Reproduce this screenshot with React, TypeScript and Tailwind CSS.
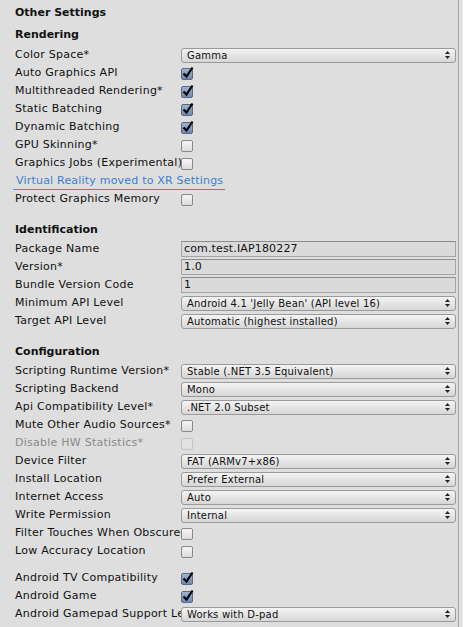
import type { ReactNode } from "react";

const font = "font-['DejaVu_Sans','Liberation_Sans',sans-serif]";

function Arrows() {
  return (
    <svg width="5" height="8" viewBox="0 0 5 8" className="shrink-0">
      <path d="M2.5 0 L5 3 L0 3 Z" fill="#222" />
      <path d="M0 5 L5 5 L2.5 8 Z" fill="#222" />
    </svg>
  );
}

function Popup({ value }: { value: string }) {
  return (
    <div className="flex h-[15px] w-[275px] items-center justify-between rounded-[3px] border border-[#9a9a9a] bg-gradient-to-b from-[#f4f4f4] to-[#d6d6d6] pl-[5px] pr-[5px] text-[10px] tracking-[0.2px] text-[#111]">
      <span className="whitespace-nowrap">{value}</span>
      <Arrows />
    </div>
  );
}

function TextField({ value }: { value: string }) {
  return (
    <div className="flex h-[16px] w-[275px] items-center border border-[#a4a4a4] border-t-[#8c8c8c] bg-[#dadada] pl-[2px] text-[11px] tracking-[0.15px] text-[#111]">
      {value}
    </div>
  );
}

function Check({ on, disabled }: { on?: boolean; disabled?: boolean }) {
  if (on) {
    return (
      <div className="relative mt-[2px] h-[12px] w-[12px] rounded-[2px] border border-[#5b6a80] bg-gradient-to-b from-[#9db3d3] to-[#6f89b0]">
        <svg width="12" height="13" viewBox="0 0 12 13" className="absolute left-[0px] top-[-3px]">
          <path d="M1.5 7.5 L4.5 10.5 L10.5 1.5" fill="none" stroke="#000" strokeWidth="2.2" />
        </svg>
      </div>
    );
  }
  return (
    <div
      className={
        disabled
          ? "mt-[2px] h-[12px] w-[12px] rounded-[2px] border border-[#c4c4c4] bg-[#e2e2e2]"
          : "mt-[2px] h-[12px] w-[12px] rounded-[2px] border border-[#8a8a8a] bg-gradient-to-b from-[#f6f6f6] to-[#dcdcdc]"
      }
    />
  );
}

function Row({ label, children, dim }: { label: string; children?: ReactNode; dim?: boolean }) {
  return (
    <div className="flex h-[18px] items-center">
      <div
        className={`w-[181px] shrink-0 overflow-hidden whitespace-nowrap pl-[15px] pr-[2px] text-[11px] leading-[18px] tracking-[0.25px] ${
          dim ? "text-[#8a8a8a]" : "text-[#111]"
        }`}
      >
        {label}
      </div>
      <div className="flex items-center">{children}</div>
    </div>
  );
}

function Heading({ text, className }: { text: string; className?: string }) {
  return (
    <div className={`flex h-[18px] items-center pl-[15px] text-[11px] font-bold text-[#111] ${className ?? ""}`}>
      {text}
    </div>
  );
}

export default function App() {
  return (
    <div className={`flex h-[627px] w-[463px] overflow-hidden bg-[#dedede] ${font}`}>
      {/* settings panel */}
      <div className="flex w-[459px] shrink-0 flex-col border-r border-[#a6a6a6] pt-[4px]">
        <Heading text="Other Settings" />

        <Heading text="Rendering" className="mt-[4px]" />
        <div className="mt-[2px] flex flex-col">
          <Row label="Color Space*">
            <Popup value="Gamma" />
          </Row>
          <Row label="Auto Graphics API">
            <Check on />
          </Row>
          <Row label="Multithreaded Rendering*">
            <Check on />
          </Row>
          <Row label="Static Batching">
            <Check on />
          </Row>
          <Row label="Dynamic Batching">
            <Check on />
          </Row>
          <Row label="GPU Skinning*">
            <Check />
          </Row>
          <Row label="Graphics Jobs (Experimental)">
            <Check />
          </Row>
          <div className="flex h-[18px] flex-col">
            <span className="pl-[16px] text-[11px] leading-[17px] tracking-[0.2px] text-[#3b7fd6]">Virtual Reality moved to XR Settings</span>
            <div className="ml-[13px] h-px w-[212px] bg-[#4a8ae0]" />
          </div>
          <Row label="Protect Graphics Memory">
            <Check />
          </Row>
        </div>

        <Heading text="Identification" className="mt-[13px]" />
        <div className="mt-[1px] flex flex-col">
          <Row label="Package Name">
            <TextField value="com.test.IAP180227" />
          </Row>
          <Row label="Version*">
            <TextField value="1.0" />
          </Row>
          <Row label="Bundle Version Code">
            <TextField value="1" />
          </Row>
          <Row label="Minimum API Level">
            <Popup value="Android 4.1 'Jelly Bean' (API level 16)" />
          </Row>
          <Row label="Target API Level">
            <Popup value="Automatic (highest installed)" />
          </Row>
        </div>

        <Heading text="Configuration" className="mt-[13px]" />
        <div className="mt-[1px] flex flex-col">
          <Row label="Scripting Runtime Version*">
            <Popup value="Stable (.NET 3.5 Equivalent)" />
          </Row>
          <Row label="Scripting Backend">
            <Popup value="Mono" />
          </Row>
          <Row label="Api Compatibility Level*">
            <Popup value=".NET 2.0 Subset" />
          </Row>
          <Row label="Mute Other Audio Sources*">
            <Check />
          </Row>
          <Row label="Disable HW Statistics*" dim>
            <Check disabled />
          </Row>
          <Row label="Device Filter">
            <Popup value="FAT (ARMv7+x86)" />
          </Row>
          <Row label="Install Location">
            <Popup value="Prefer External" />
          </Row>
          <Row label="Internet Access">
            <Popup value="Auto" />
          </Row>
          <Row label="Write Permission">
            <Popup value="Internal" />
          </Row>
          <Row label="Filter Touches When Obscured">
            <Check />
          </Row>
          <Row label="Low Accuracy Location">
            <Check />
          </Row>
        </div>

        <div className="mt-[9px] flex flex-col">
          <Row label="Android TV Compatibility">
            <Check on />
          </Row>
          <Row label="Android Game">
            <Check on />
          </Row>
          <Row label="Android Gamepad Support Level">
            <Popup value="Works with D-pad" />
          </Row>
        </div>
      </div>
      {/* scroll gutter */}
      <div className="flex-1 bg-[#e3e3e3]" />
    </div>
  );
}
